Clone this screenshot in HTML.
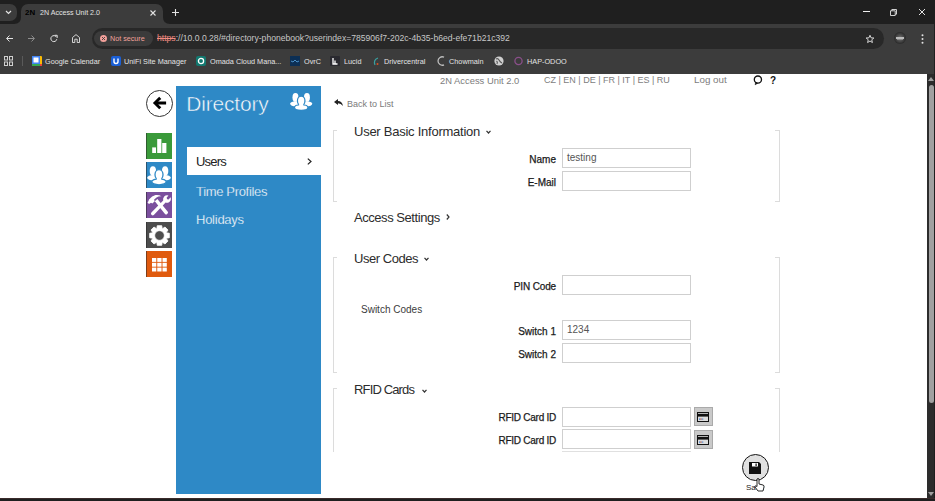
<!DOCTYPE html>
<html><head><meta charset="utf-8">
<style>
*{margin:0;padding:0;box-sizing:border-box}
html,body{width:935px;height:501px;overflow:hidden;background:#fff;font-family:"Liberation Sans",sans-serif}
.a{position:absolute;white-space:nowrap;line-height:1}
svg{position:absolute;overflow:visible}
#tabs{position:absolute;left:0;top:0;width:935px;height:24px;background:#1f1f1f}
#toolbar{position:absolute;left:0;top:24px;width:935px;height:27px;background:#3c3c3c}
#bm{position:absolute;left:0;top:51px;width:935px;height:23px;background:#3c3c3c}
#sb{position:absolute;left:927px;top:74px;width:8px;height:424px;background:#2c2c2c;border-right:1px solid #1f1f1f}
#bottom{position:absolute;left:0;top:498px;width:935px;height:3px;background:#1f1f1f;border-top:1px solid #3a2b2b}
.tabtxt{font-size:7.1px;color:#e3e3e3}
.bmt{font-size:7.3px;color:#e3e3e3;top:58px}
.ico{position:absolute;width:26px;height:26px;left:146px;border-left:1px solid rgba(40,40,40,0.55)}
.lbl{font-size:10px;color:#1a1a1a;text-align:right;width:120px;-webkit-text-stroke:0.25px #1a1a1a;margin-top:-0.5px}
.inp{position:absolute;left:562px;width:129px;height:20px;border:1px solid #cfcfcf;background:#fff}
.br{position:absolute;border:1px solid #dcdcdc}
.sec{font-size:13px;color:#2c2c2c}
.nav{font-size:13px;color:#fff;-webkit-text-stroke:0.25px #2e89c6}
</style></head><body>
<div id="tabs"></div>
<!-- tab strip -->
<div class="a" style="left:0;top:4px;width:17px;height:17px;background:#3c3c3c;border-radius:0 7px 7px 0"></div>
<svg style="left:5px;top:10px" width="7" height="5" viewBox="0 0 7 5"><path d="M1 1 L3.5 3.5 L6 1" fill="none" stroke="#e3e3e3" stroke-width="1.2"/></svg>
<div class="a" style="left:21px;top:4px;width:142px;height:21px;background:#3c3c3c;border-radius:7px 7px 0 0"></div>
<svg style="left:14px;top:17px" width="7" height="7" viewBox="0 0 7 7"><path d="M0 7 Q7 7 7 0 L7 7 Z" fill="#3c3c3c"/></svg>
<svg style="left:163px;top:17px" width="7" height="7" viewBox="0 0 7 7"><path d="M7 7 Q0 7 0 0 L0 7 Z" fill="#3c3c3c"/></svg>
<div class="a" style="left:25px;top:8.8px;font-size:7.5px;font-weight:bold;color:#000;letter-spacing:0.2px;transform:scaleX(1.05);transform-origin:0 0">2N</div>
<div class="a tabtxt" style="left:40px;top:10px">2N Access Unit 2.0</div>
<svg style="left:150px;top:10px" width="6" height="6" viewBox="0 0 6 6"><path d="M0.5 0.5 L5.5 5.5 M5.5 0.5 L0.5 5.5" stroke="#e3e3e3" stroke-width="1.1"/></svg>
<svg style="left:172px;top:9px" width="7" height="7" viewBox="0 0 7 7"><path d="M3.5 0 V7 M0 3.5 H7" stroke="#e3e3e3" stroke-width="1.1"/></svg>
<div class="a" style="left:863px;top:11px;width:7px;height:1px;background:#f0f0f0"></div>
<svg style="left:890px;top:9px" width="7" height="7" viewBox="0 0 7 7"><path d="M0.5 1.8 H5.2 V6.5 H0.5 Z M1.8 1.8 V0.5 H6.5 V5.2 H5.2" fill="none" stroke="#e3e3e3" stroke-width="0.9"/></svg>
<svg style="left:919px;top:9px" width="6" height="6" viewBox="0 0 6 6"><path d="M0 0 L6 6 M6 0 L0 6" stroke="#e3e3e3" stroke-width="1"/></svg>
<div id="toolbar"></div>
<!-- toolbar -->
<svg style="left:6px;top:35px" width="7" height="7" viewBox="0 0 7 7"><path d="M7 3.5 H0.8 M3.5 0.5 L0.6 3.5 L3.5 6.5" fill="none" stroke="#e3e3e3" stroke-width="1"/></svg>
<svg style="left:28px;top:35px" width="7" height="7" viewBox="0 0 7 7"><path d="M0 3.5 H6.2 M3.5 0.5 L6.4 3.5 L3.5 6.5" fill="none" stroke="#8e8e8e" stroke-width="1"/></svg>
<svg style="left:50px;top:35px" width="8" height="7" viewBox="0 0 8 7"><path d="M6.5 2.2 A3 3 0 1 0 6.8 4.2" fill="none" stroke="#e3e3e3" stroke-width="1"/><path d="M4.6 0.3 H7.2 V2.9" fill="none" stroke="#e3e3e3" stroke-width="1"/></svg>
<svg style="left:72px;top:34px" width="8" height="9" viewBox="0 0 8 9"><path d="M0.5 8.5 V3.5 L4 0.6 L7.5 3.5 V8.5 H5.2 V5.2 H2.8 V8.5 Z" fill="none" stroke="#e3e3e3" stroke-width="0.9"/></svg>
<div class="a" style="left:92px;top:28px;width:792px;height:21px;background:#282828;border-radius:10.5px"></div>
<div class="a" style="left:94px;top:31px;width:59px;height:15px;background:#3b3b3b;border-radius:7.5px"></div>
<svg style="left:100px;top:35px" width="7" height="7" viewBox="0 0 7 7"><circle cx="3.5" cy="3.5" r="3.5" fill="#f2a09a"/><path d="M2 2 L5 5 M5 2 L2 5" stroke="#3b3b3b" stroke-width="0.9"/></svg>
<div class="a" style="left:110px;top:35px;font-size:7.2px;color:#f2a29a">Not secure</div>
<div class="a" style="left:157px;top:34px;font-size:8.6px;color:#c7c7c7"><span style="color:#f08a80;text-decoration:line-through">https</span>://10.0.0.28/#directory-phonebook?userindex=785906f7-202c-4b35-b6ed-efe71b21c392</div>
<svg style="left:865px;top:34px" width="10" height="10" viewBox="0 0 24 24"><path d="M12 3 L14.6 9.2 L21.3 9.6 L16.2 13.9 L17.8 20.5 L12 16.9 L6.2 20.5 L7.8 13.9 L2.7 9.6 L9.4 9.2 Z" fill="none" stroke="#e3e3e3" stroke-width="2.2" stroke-linejoin="round"/></svg>
<div class="a" style="left:894px;top:32px;width:12px;height:12px;border-radius:50%;background:radial-gradient(circle,#777 0%,#333 60%,#111 100%)"></div>
<div class="a" style="left:896px;top:37px;width:8px;height:1.5px;background:#bbb"></div><div class="a" style="left:897px;top:39px;width:6px;height:1px;background:#888"></div>
<svg style="left:921px;top:34px" width="3" height="10" viewBox="0 0 3 10"><circle cx="1.5" cy="1.2" r="1" fill="#e3e3e3"/><circle cx="1.5" cy="5" r="1" fill="#e3e3e3"/><circle cx="1.5" cy="8.8" r="1" fill="#e3e3e3"/></svg>
<div id="bm"></div><div class="a" style="left:934px;top:24px;width:1px;height:50px;background:#202020"></div>
<!-- bookmarks -->
<svg style="left:4px;top:56px" width="9" height="10" viewBox="0 0 9 10"><rect x="0.5" y="0.5" width="3" height="3.5" fill="none" stroke="#d0d0d0" stroke-width="1"/><rect x="5.5" y="0.5" width="3" height="3.5" fill="none" stroke="#d0d0d0" stroke-width="1"/><rect x="0.5" y="6" width="3" height="3.5" fill="none" stroke="#d0d0d0" stroke-width="1"/><rect x="5.5" y="6" width="3" height="3.5" fill="none" stroke="#d0d0d0" stroke-width="1"/></svg>
<div class="a" style="left:22px;top:56px;width:1px;height:10px;background:#5a5a5a"></div>
<svg style="left:32px;top:56px" width="10" height="10" viewBox="0 0 10 10"><rect x="0" y="0" width="10" height="10" rx="1" fill="#fbbc04"/><rect x="0" y="0" width="8" height="8" fill="#4285f4"/><rect x="0" y="8" width="8" height="2" fill="#34a853"/><rect x="1.5" y="1.5" width="5" height="5" fill="#fff"/><rect x="8" y="8" width="2" height="2" fill="#ea4335"/></svg>
<div class="a bmt" style="left:45px">Google Calendar</div>
<svg style="left:111px;top:56px" width="10" height="10" viewBox="0 0 10 10"><rect width="10" height="10" rx="2" fill="#1a5fd6"/><path d="M3 2.5 V5.5 A2 2 0 0 0 7 5.5 V2.5" fill="none" stroke="#fff" stroke-width="1.4"/></svg>
<div class="a bmt" style="left:124px">UniFi Site Manager</div>
<svg style="left:196px;top:56px" width="10" height="10" viewBox="0 0 10 10"><rect width="10" height="10" rx="2" fill="#12786f"/><circle cx="5" cy="5" r="2.6" fill="none" stroke="#fff" stroke-width="1.3"/></svg>
<div class="a bmt" style="left:210px">Omada Cloud Mana...</div>
<svg style="left:290px;top:56px" width="10" height="10" viewBox="0 0 10 10"><rect width="10" height="10" fill="#0c2f55"/><path d="M1 5 L3 6 L5 4 L7 6 L9 5" fill="none" stroke="#5aa9e6" stroke-width="0.8"/></svg>
<div class="a bmt" style="left:304px">OvrC</div>
<svg style="left:330px;top:56px" width="10" height="10" viewBox="0 0 10 10"><rect width="10" height="10" rx="1" fill="#2a2a30"/><path d="M3 2 V8 H7.5 M5 4.5 V8" fill="none" stroke="#fff" stroke-width="1.3"/></svg>
<div class="a bmt" style="left:344px">Lucid</div>
<svg style="left:372px;top:57px" width="10" height="10" viewBox="0 0 10 10"><path d="M6 1 Q1 3 3 8" fill="none" stroke="#3aa0a0" stroke-width="1.2"/><circle cx="5.5" cy="7" r="1" fill="#e05020"/></svg>
<div class="a bmt" style="left:384px">Drivercentral</div>
<svg style="left:437px;top:56px" width="8" height="10" viewBox="0 0 8 10"><path d="M7 1.2 A4.2 4.2 0 1 0 7 8.8" fill="none" stroke="#bdbdbd" stroke-width="1.3"/></svg>
<div class="a bmt" style="left:449px">Chowmain</div>
<svg style="left:494px;top:56px" width="10" height="10" viewBox="0 0 10 10"><circle cx="5" cy="5" r="4.6" fill="#d0d0d0"/><path d="M2 3 Q4 2 5 4 Q6 6 8 7 M3 8 Q4 6 2.5 5" fill="none" stroke="#555" stroke-width="1.1"/></svg>
<svg style="left:514px;top:56px" width="9" height="10" viewBox="0 0 9 10"><circle cx="4.5" cy="5" r="3.6" fill="none" stroke="#8a4f8a" stroke-width="1.3"/></svg>
<div class="a bmt" style="left:527px">HAP-ODOO</div>

<!-- page -->
<div id="sb"></div>
<div class="a" style="left:928px;top:77px;width:0;height:0;border-left:3px solid transparent;border-right:3px solid transparent;border-bottom:4.5px solid #a0a0a0"></div>
<div class="a" style="left:928.5px;top:85px;width:5px;height:318px;background:#a0a0a0;border-radius:2.5px"></div>
<div class="a" style="left:928px;top:492px;width:0;height:0;border-left:3px solid transparent;border-right:3px solid transparent;border-top:4.5px solid #a0a0a0"></div>
<div id="bottom"></div>

<div class="a" style="left:146px;top:90px;width:27px;height:27px;border:1px solid #333;border-radius:50%"></div>
<svg style="left:0;top:0" width="935" height="501" viewBox="0 0 935 501"><path d="M152.9 103 L159.2 96.8 L161.3 98.9 L158.2 101.6 L166.1 101.6 L166.1 104.6 L158.2 104.6 L161.3 107.2 L159.2 109.3 Z" fill="#000"/></svg>
<div class="a" style="left:176px;top:86px;width:145px;height:408px;background:#2e89c6"></div>
<div class="a nav" style="left:186.3px;top:92.7px;font-size:21px;letter-spacing:-0.2px;-webkit-text-stroke:0.5px #2e89c6">Directory</div>
<svg style="left:288.9px;top:88.7px" width="24.4" height="24.4" viewBox="0 0 26 26"><g fill="#fff"><ellipse cx="6.9" cy="9" rx="3.2" ry="4.7"/><ellipse cx="7.4" cy="15.8" rx="6.2" ry="2.8"/><ellipse cx="19.1" cy="9" rx="3.2" ry="4.7"/><ellipse cx="18.6" cy="15.8" rx="6.2" ry="2.8"/><ellipse cx="13" cy="12.6" rx="4" ry="5" stroke="#2e89c6" stroke-width="1.3"/><ellipse cx="13" cy="19.8" rx="7.2" ry="3" stroke="#2e89c6" stroke-width="1.3"/><rect x="10.8" y="15.5" width="4.4" height="3"/></g></svg>
<div class="a" style="left:187px;top:147px;width:134px;height:28px;background:#fff"></div>
<div class="a nav" style="left:196px;top:155px;color:#222;letter-spacing:-0.8px;-webkit-text-stroke:0">Users</div>
<svg style="left:307px;top:158px" width="5" height="7" viewBox="0 0 5 7"><path d="M0.8 0.6 L4 3.5 L0.8 6.4" fill="none" stroke="#222" stroke-width="1.2"/></svg>
<div class="a nav" style="left:196px;top:185px;letter-spacing:-0.33px">Time Profiles</div>
<div class="a nav" style="left:196px;top:213px;letter-spacing:-0.25px">Holidays</div>

<div class="ico" style="top:133px;background:#3a9a3a"></div>
<svg style="left:152px;top:139px" width="15" height="14" viewBox="0 0 15 14"><g fill="#fff"><rect x="0.2" y="8.4" width="3.8" height="5.6"/><rect x="5.2" y="0" width="4.2" height="14"/><rect x="10.2" y="4" width="4.2" height="10"/></g></svg>
<div class="ico" style="top:162px;background:#2e89c6"></div>
<svg style="left:146px;top:162px" width="26" height="26" viewBox="0 0 26 26"><g fill="#fff"><ellipse cx="6.9" cy="9" rx="3.2" ry="4.7"/><ellipse cx="7.4" cy="15.8" rx="6.2" ry="2.8"/><ellipse cx="19.1" cy="9" rx="3.2" ry="4.7"/><ellipse cx="18.6" cy="15.8" rx="6.2" ry="2.8"/><ellipse cx="13" cy="12.6" rx="4" ry="5" stroke="#2e89c6" stroke-width="1.3"/><ellipse cx="13" cy="19.8" rx="7.2" ry="3" stroke="#2e89c6" stroke-width="1.3"/><rect x="10.8" y="15.5" width="4.4" height="3"/></g></svg>
<div class="ico" style="top:192px;background:#7b4f9e"></div>
<svg style="left:146px;top:192px" width="26" height="26" viewBox="0 0 26 26"><g fill="#fff">
<path d="M1.5 10.5 L3 12 L5 10.8 L6.3 11.6 L8.8 9.2 L8 7.8 L10.5 5.5 Q12.5 4 15.5 4.2 Q13 2.6 9.5 3 Q6 3.8 3 7.5 L2.4 9.2 Z"/>
<path d="M8.8 9.3 L11.4 7 L21.8 19.8 Q22.5 21 21.4 21.8 L20.6 22.4 Q19.4 23 18.8 21.8 Z"/>
<path d="M22.5 3.4 L20.6 5.8 L21.2 7.2 L22.6 7.4 L24.6 5.2 Q25.6 8.6 23 10.2 Q21.4 11.2 19.6 10.6 L7.8 23 Q6.6 23.8 5.8 23 L5.2 22.4 Q4.6 21.6 5.4 20.6 L17.2 8.6 Q16.6 6.2 18.2 4.4 Q20 2.6 22.5 3.4 Z"/>
</g></svg>
<div class="ico" style="top:222px;background:#4d4d4d"></div>
<svg style="left:149px;top:224.6px" width="21" height="21" viewBox="0 0 21 21"><path fill="#fff" fill-rule="evenodd" stroke="#fff" stroke-width="0.8" stroke-linejoin="round" d="M17.61 7.82 L20.35 8.25 L20.35 12.75 L17.61 13.18 L17.42 13.64 L19.0 16.02 L16.02 19.0 L13.64 17.42 L13.18 17.61 L12.75 20.35 L8.25 20.35 L7.82 17.61 L7.36 17.42 L4.98 19.0 L2.0 16.02 L3.58 13.64 L3.39 13.18 L0.65 12.75 L0.65 8.25 L3.39 7.82 L3.58 7.36 L2.0 4.98 L4.98 2.0 L7.36 3.58 L7.82 3.39 L8.25 0.65 L12.75 0.65 L13.18 3.39 L13.64 3.58 L16.02 2.0 L19.0 4.98 L17.42 7.36 Z M10.5 5.7 A4.8 4.8 0 1 0 10.51 5.7 Z"/></svg>
<div class="ico" style="top:251px;background:#e05a0e"></div>
<svg style="left:152px;top:258px" width="15" height="14" viewBox="0 0 15 14"><g fill="#fff"><rect x="0.00" y="0.00" width="4.3" height="3.9"/><rect x="5.25" y="0.00" width="4.3" height="3.9"/><rect x="10.50" y="0.00" width="4.3" height="3.9"/><rect x="0.00" y="4.80" width="4.3" height="3.9"/><rect x="5.25" y="4.80" width="4.3" height="3.9"/><rect x="10.50" y="4.80" width="4.3" height="3.9"/><rect x="0.00" y="9.60" width="4.3" height="3.9"/><rect x="5.25" y="9.60" width="4.3" height="3.9"/><rect x="10.50" y="9.60" width="4.3" height="3.9"/></g></svg>

<div class="a" style="left:440px;top:75.7px;font-size:9.4px;color:#7d7d7d">2N Access Unit 2.0</div>
<div class="a" style="left:544px;top:76px;font-size:9px;color:#7d7d7d">CZ | EN | DE | FR | IT | ES | RU</div>
<div class="a" style="left:694px;top:74.8px;font-size:9.8px;color:#7d7d7d">Log out</div>
<svg style="left:0;top:0" width="935" height="501" viewBox="0 0 935 501"><circle cx="757.9" cy="79.6" r="3.6" fill="none" stroke="#111" stroke-width="1.3"/><path d="M755.6 82.2 L755.2 84.8 L757.6 83.2 Z" fill="#111" stroke="#111" stroke-width="0.6"/></svg>
<div class="a" style="left:770px;top:76px;font-size:10px;font-weight:bold;color:#111">?</div>
<svg style="left:334px;top:99px" width="9" height="7" viewBox="0 0 9 7"><path d="M0 3 L4 0 V2 Q8 2 9 7 Q7 4.2 4 4.2 V6 Z" fill="#222"/></svg>
<div class="a" style="left:347px;top:99.5px;font-size:9px;color:#7a7a7a">Back to List</div>

<div class="br" style="left:333px;top:130px;width:4px;height:72px;border-right:0"></div>
<div class="br" style="left:775px;top:130px;width:5px;height:72px;border-left:0"></div>
<div class="a sec" style="left:354px;top:124.5px;letter-spacing:-0.25px">User Basic Information</div>
<svg style="left:486px;top:130px" width="5" height="4" viewBox="0 0 5 4"><path d="M0.5 0.8 L2.5 3 L4.5 0.8" fill="none" stroke="#333" stroke-width="1.2"/></svg>
<div class="a lbl" style="left:436px;top:155px">Name</div>
<div class="inp" style="top:148px"></div>
<div class="a" style="left:567px;top:153px;font-size:10px;color:#555">testing</div>
<div class="a lbl" style="left:436px;top:178px">E-Mail</div>
<div class="inp" style="top:171px"></div>
<div class="a sec" style="left:354px;top:211.3px;letter-spacing:-0.45px">Access Settings</div>
<svg style="left:446px;top:214px" width="4" height="6" viewBox="0 0 4 6"><path d="M0.8 0.5 L3 3 L0.8 5.5" fill="none" stroke="#333" stroke-width="1.2"/></svg>

<div class="br" style="left:333px;top:257px;width:4px;height:116px;border-right:0"></div>
<div class="br" style="left:775px;top:257px;width:5px;height:116px;border-left:0"></div>
<div class="a sec" style="left:354px;top:252.3px;letter-spacing:-0.45px">User Codes</div>
<svg style="left:424px;top:257px" width="5" height="4" viewBox="0 0 5 4"><path d="M0.5 0.8 L2.5 3 L4.5 0.8" fill="none" stroke="#333" stroke-width="1.2"/></svg>
<div class="a lbl" style="left:436px;top:282px;letter-spacing:-0.15px">PIN Code</div>
<div class="inp" style="top:275px"></div>
<div class="a" style="left:361px;top:305.2px;font-size:10px;color:#3c3c3c">Switch Codes</div>
<div class="a lbl" style="left:436px;top:327px">Switch 1</div>
<div class="inp" style="top:320px"></div>
<div class="a" style="left:567px;top:325px;font-size:10px;color:#555">1234</div>
<div class="a lbl" style="left:436px;top:350px">Switch 2</div>
<div class="inp" style="top:343px"></div>

<div class="br" style="left:333px;top:388px;width:4px;height:64px;border-right:0;border-bottom:0"></div>
<div class="br" style="left:775px;top:388px;width:5px;height:64px;border-left:0;border-bottom:0"></div>
<div class="a sec" style="left:354px;top:383px;letter-spacing:-0.85px">RFID Cards</div>
<svg style="left:422px;top:389px" width="5" height="4" viewBox="0 0 5 4"><path d="M0.5 0.8 L2.5 3 L4.5 0.8" fill="none" stroke="#333" stroke-width="1.2"/></svg>
<div class="a lbl" style="left:436px;top:413px;letter-spacing:-0.25px">RFID Card ID</div>
<div class="inp" style="top:407px"></div>
<div class="a" style="left:694px;top:407px;width:19px;height:19px;background:#c9c9c9;border:1px solid #aaa"></div>
<svg style="left:697px;top:412px" width="12" height="10" viewBox="0 0 12 10"><rect x="0.5" y="0.5" width="11" height="9" fill="#dcdcdc" stroke="#111" stroke-width="1"/><rect x="0.5" y="1.8" width="11" height="2.8" fill="#111"/><rect x="2" y="6.5" width="1.2" height="1.2" fill="#3a7ad0"/><rect x="3.4" y="6.5" width="1.2" height="1.2" fill="#b04020"/><rect x="4.8" y="6.5" width="1.5" height="1.2" fill="#5a8ad0"/></svg>
<div class="a lbl" style="left:436px;top:436px;letter-spacing:-0.25px">RFID Card ID</div>
<div class="inp" style="top:429px"></div>
<div class="a" style="left:694px;top:430px;width:19px;height:19px;background:#c9c9c9;border:1px solid #aaa"></div>
<svg style="left:697px;top:435px" width="12" height="10" viewBox="0 0 12 10"><rect x="0.5" y="0.5" width="11" height="9" fill="#dcdcdc" stroke="#111" stroke-width="1"/><rect x="0.5" y="1.8" width="11" height="2.8" fill="#111"/><rect x="2" y="6.5" width="1.2" height="1.2" fill="#3a7ad0"/><rect x="3.4" y="6.5" width="1.2" height="1.2" fill="#b04020"/><rect x="4.8" y="6.5" width="1.5" height="1.2" fill="#5a8ad0"/></svg>
<div class="a" style="left:562px;top:451px;width:129px;height:1px;background:#e0e0e0"></div>

<div class="a" style="left:742px;top:454px;width:27px;height:27px;border:1.8px solid #151515;border-radius:50%;background:#e0e0e0"></div>
<svg style="left:749px;top:462px" width="12" height="12" viewBox="0 0 12 12"><path d="M0 0 H10 L12 2 V12 H0 Z" fill="#111"/><rect x="3" y="1" width="6" height="3.5" fill="#fff"/><rect x="6.5" y="1.5" width="1.2" height="2.5" fill="#111"/></svg>
<div class="a" style="left:746px;top:484px;font-size:8px;color:#222">Save</div>
<svg style="left:754px;top:478px" width="11" height="14" viewBox="0 0 11 14"><path d="M3 1 Q4 0 5 1 V6 L9 7 Q10.5 7.5 10 9 L9 13 H4 L1 9 Q0.5 8 1.8 7.8 L3 8.5 Z" fill="#fff" stroke="#111" stroke-width="0.9"/></svg>
</body></html>
